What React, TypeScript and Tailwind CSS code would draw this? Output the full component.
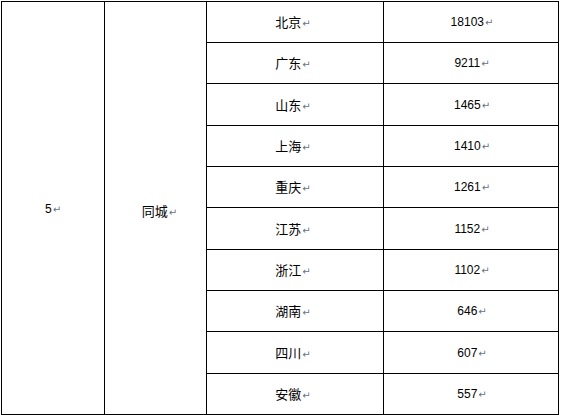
import React from 'react';

const rows = [
  { name: '北京', value: '18103', h: 'h-[41px]' },
  { name: '广东', value: '9211', h: 'h-[41px]' },
  { name: '山东', value: '1465', h: 'h-[42px]' },
  { name: '上海', value: '1410', h: 'h-[41px]' },
  { name: '重庆', value: '1261', h: 'h-[41px]' },
  { name: '江苏', value: '1152', h: 'h-[42px]' },
  { name: '浙江', value: '1102', h: 'h-[41px]' },
  { name: '湖南', value: '646', h: 'h-[41px]' },
  { name: '四川', value: '607', h: 'h-[42px]' },
  { name: '安徽', value: '557', h: 'h-[40px]' },
];

const cjk = "font-['SimSun','Noto_Sans_CJK_SC',sans-serif]";
const num = "font-['Liberation_Sans',Arial,sans-serif]";

function Mark() {
  return <span className="text-[10px] text-gray-500 font-['DejaVu_Sans',sans-serif] ml-[1px]">↵</span>;
}

export default function App() {
  return (
    <div className="w-[561px] h-[415px] bg-white pt-[1px] pl-[1px]">
      <div className="w-[558px] flex border border-black text-black">
        {/* rank */}
        <div className={`w-[103px] border-r border-black flex items-center justify-center text-[12px] ${num}`}>
          <span className="pt-[2px]">5<Mark /></span>
        </div>
        {/* group */}
        <div className={`w-[102px] border-r border-black flex items-center justify-center text-[13px] ${cjk}`}>
          <span className="pl-[8px] pt-[6px]">同城<Mark /></span>
        </div>
        {/* provinces */}
        <div className="flex-1 flex flex-col">
          {rows.map((r, i) => (
            <div
              key={r.name}
              className={`${r.h} flex ${i < rows.length - 1 ? 'border-b border-black' : ''}`}
            >
              <div className={`w-[177px] border-r border-black flex items-center justify-center text-[13px] ${cjk}`}>
                <span className="pr-[4px]">{r.name}<Mark /></span>
              </div>
              <div className={`flex-1 flex items-center justify-center text-[12px] ${num}`}>
                <span className="pl-[2px]">{r.value}<Mark /></span>
              </div>
            </div>
          ))}
        </div>
      </div>
    </div>
  );
}
